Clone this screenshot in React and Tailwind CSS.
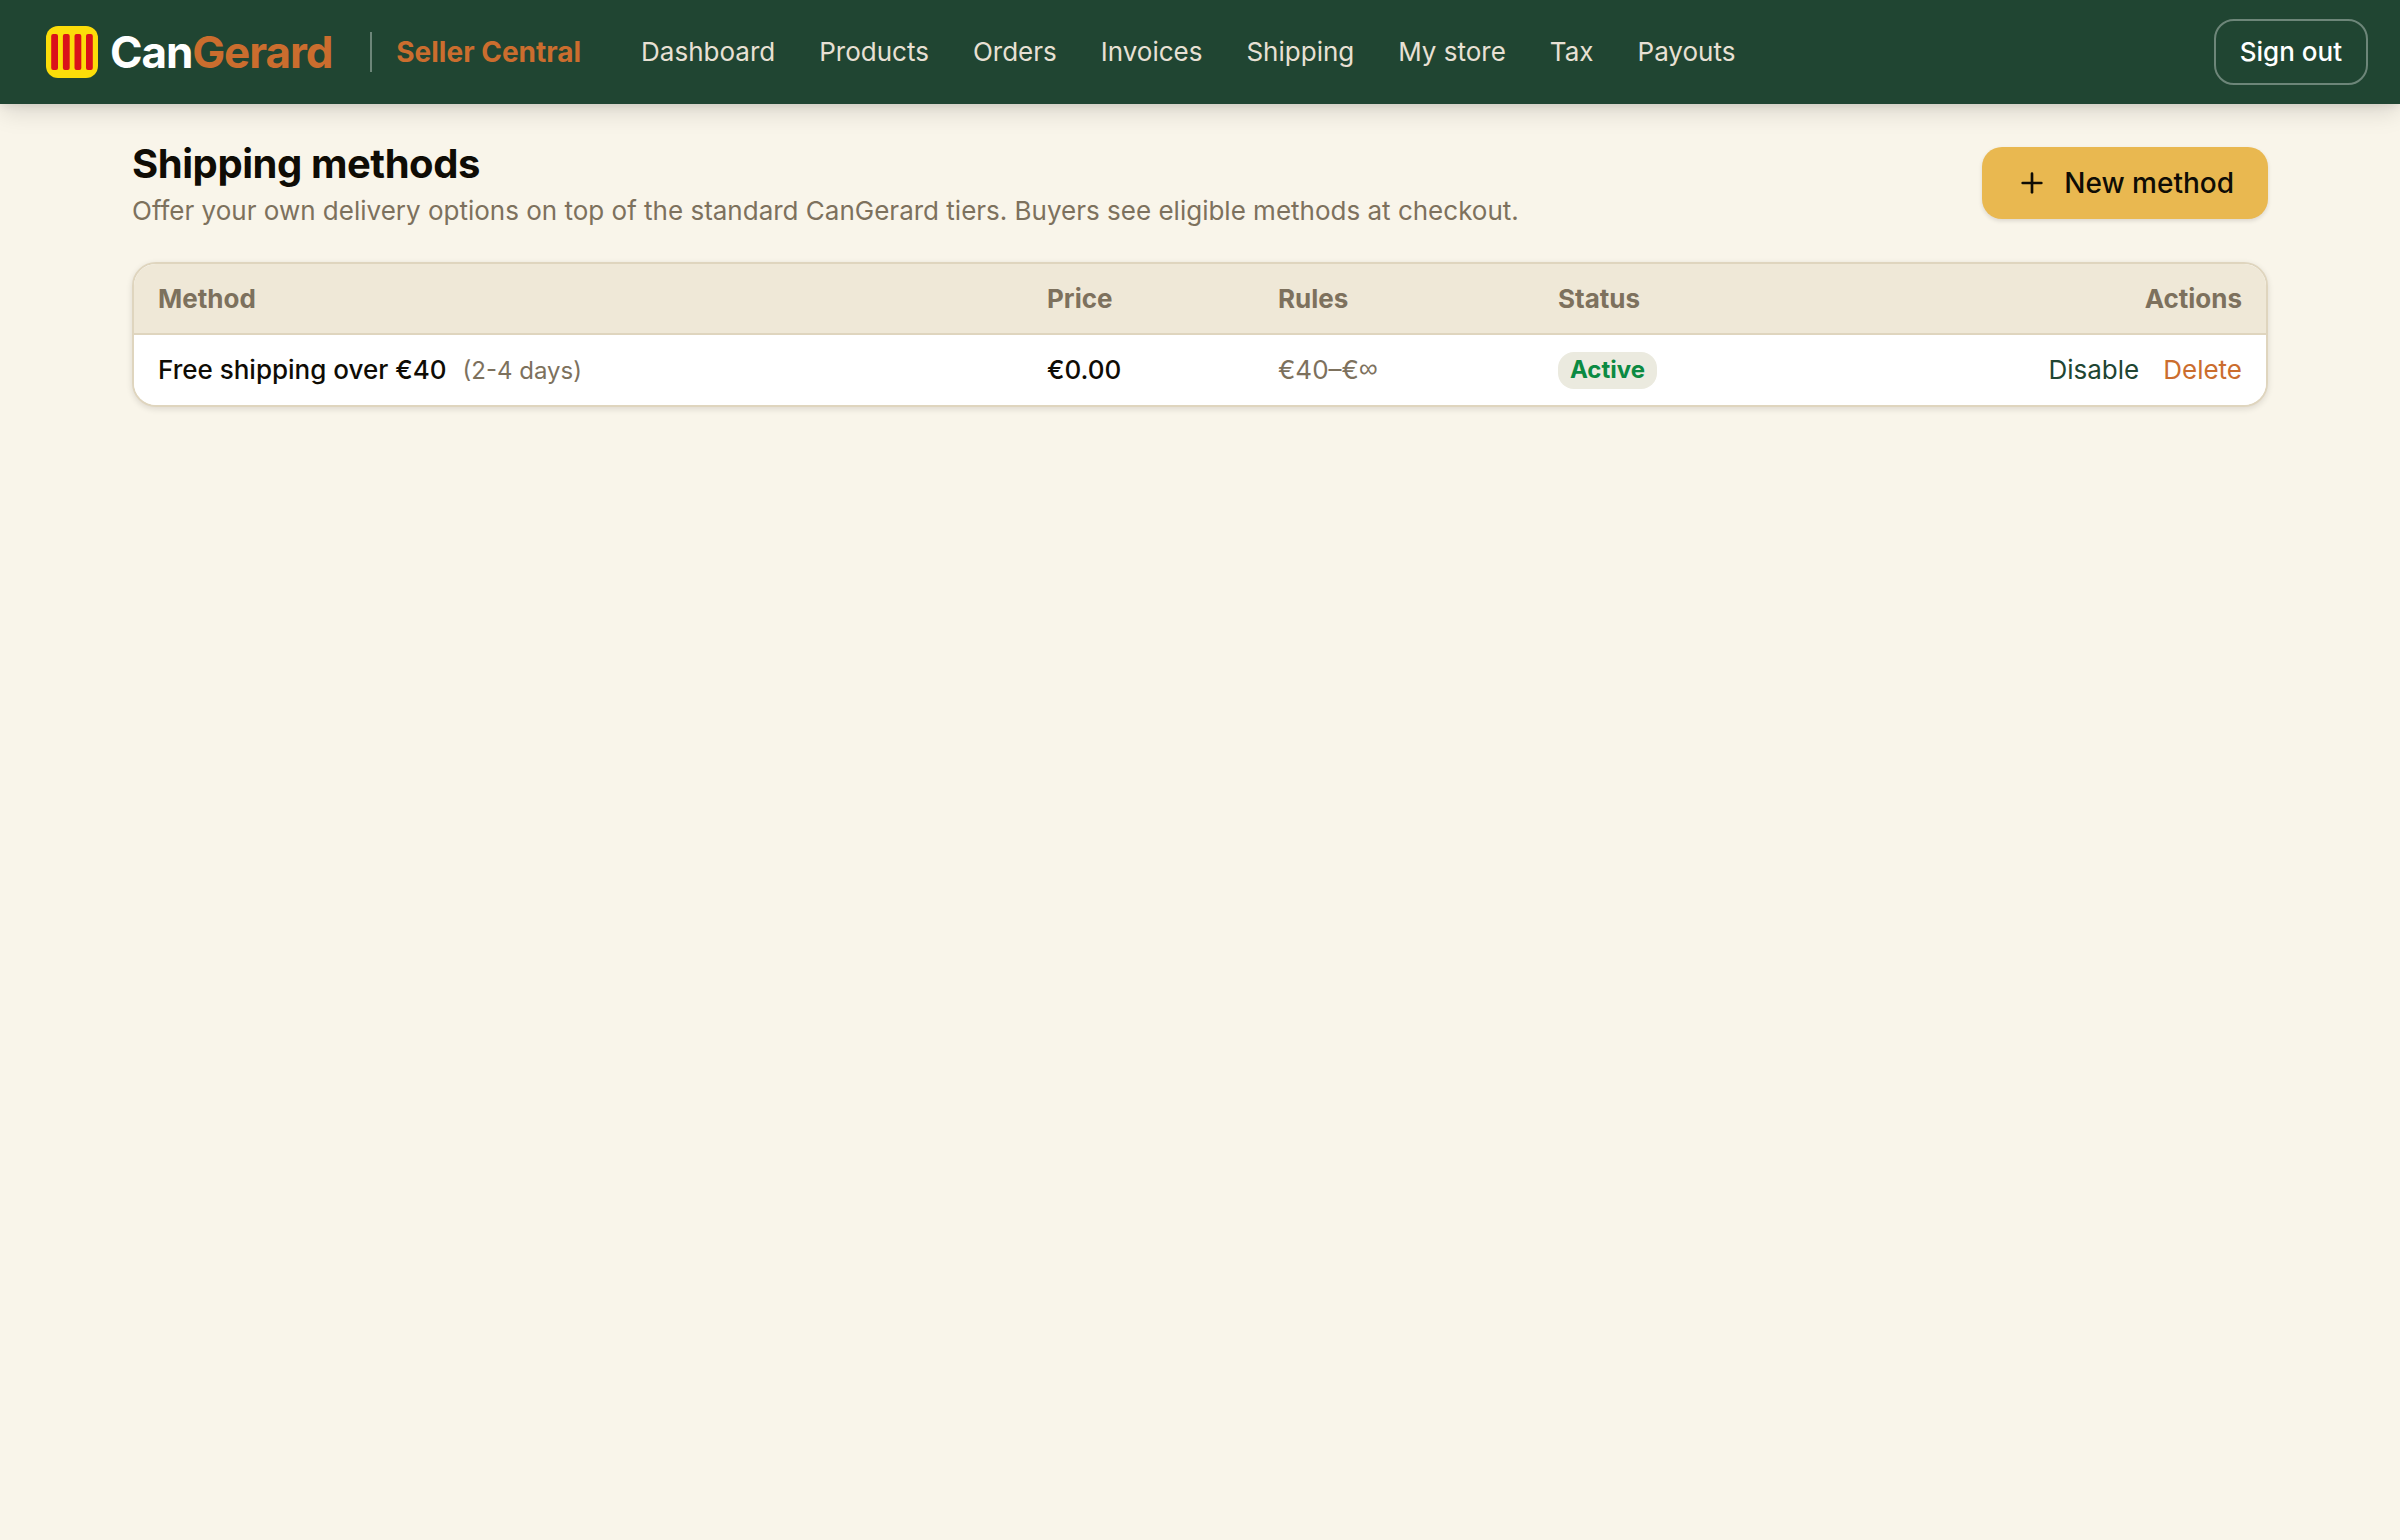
import React from 'react';
import { Plus } from 'lucide-react';

const navItems = ['Dashboard', 'Products', 'Orders', 'Invoices', 'Shipping', 'My store', 'Tax', 'Payouts'];

const methods = [
  { id: 1, name: 'Free shipping over €40', eta: '(2-4 days)', price: '€0.00', min: '€40', status: 'Active' },
];

const Logo = () => (
  <div className="flex items-center gap-3">
    <svg width="52" height="52" viewBox="0 0 52 52">
      <rect width="52" height="52" rx="12" fill="#fcdd09" />
      <rect x="5.2" y="8" width="6.8" height="36" rx="2" fill="#da121a" />
      <rect x="16.9" y="8" width="6.8" height="36" rx="2" fill="#da121a" />
      <rect x="28.5" y="8" width="6.8" height="36" rx="2" fill="#da121a" />
      <rect x="40" y="8" width="6.8" height="36" rx="2" fill="#da121a" />
    </svg>
    <span className="text-[44px] leading-none font-bold tracking-[-0.025em] text-white">
      Can<span className="text-[#cb6d2e]">Gerard</span>
    </span>
  </div>
);

const Header = () => (
  <header className="flex h-[104px] items-center bg-[#204532] pr-8 pl-[46px] shadow-[0_8px_24px_-2px_rgba(15,12,5,0.15),0_4px_8px_-2px_rgba(15,12,5,0.08)]">
    <Logo />
    <div className="ml-[38px] h-10 w-[2px] bg-white/35"></div>
    <span className="ml-6 text-[28px] leading-none font-bold text-[#cb6d2e]">Seller Central</span>
    <nav className="ml-[60px] flex items-center gap-[44px] pb-[2px]">
      {navItems.map((item) => (
        <a key={item} className="text-[26px] text-[#e8e0d4]">{item}</a>
      ))}
    </nav>
    <button className="ml-auto h-[66px] rounded-[20px] border-2 border-white/35 px-6 pb-[2px] text-[26px] font-medium text-white">
      Sign out
    </button>
  </header>
);

const MethodRow = ({ method }) => (
  <tr className="h-[70px] bg-white">
    <td className="px-6 pb-[2px]">
      <span className="font-medium">{method.name}</span>
      <span className="ml-4 text-2xl text-[#7d715d]">{method.eta}</span>
    </td>
    <td className="px-6 pb-[2px] font-medium">{method.price}</td>
    <td className="px-6 text-[#7d715d]">
      {method.min}–€<span className="relative -top-[2px] font-['Liberation_Sans',sans-serif]">∞</span>
    </td>
    <td className="px-6">
      <span className="flex h-[37px] w-fit items-center rounded-2xl bg-[#ebeadf] px-3 text-2xl font-bold text-[#0b8a42]">
        {method.status}
      </span>
    </td>
    <td className="px-6 pb-[2px] text-right">
      <button className="text-[#204532]">Disable</button>
      <button className="ml-6 text-[#cb6d2e]">Delete</button>
    </td>
  </tr>
);

const App = () => {
  return (
    <div className="min-h-[1540px] bg-[#f9f5ea] font-['Inter',sans-serif] text-[#0f0c05]">
      <Header />
      <main className="mx-auto w-[2136px] pt-10">
        <div className="flex h-[86px] items-start justify-between">
          <div>
            <h1 className="text-[40px] leading-[40px] font-bold tracking-[-0.011em]">Shipping methods</h1>
            <p className="mt-[7px] text-[26px] leading-[39px] text-[#7d715d]">
              Offer your own delivery options on top of the standard CanGerard tiers. Buyers see eligible methods at checkout.
            </p>
          </div>
          <button className="mt-[3px] flex h-[72px] items-center gap-4 rounded-[20px] bg-[#e9b850] px-[34px] text-[28px] font-medium shadow-[0_2px_4px_rgba(15,12,5,0.12)]">
            <Plus size={32} strokeWidth={2} />
            New method
          </button>
        </div>

        <div className="mt-8 h-[145px] overflow-hidden rounded-3xl border-2 border-[#dfd5be] bg-white shadow-[0_2px_6px_rgba(15,12,5,0.12)]">
          <table className="w-full table-fixed border-separate border-spacing-0 text-left text-[26px] leading-[39px]">
            <colgroup>
              <col className="w-[889px]" />
              <col className="w-[231px]" />
              <col className="w-[280px]" />
              <col className="w-[280px]" />
              <col />
            </colgroup>
            <thead>
              <tr className="h-[71px] bg-[#efe8d7] text-[#7d715d]">
                <th className="border-b-2 border-[#dfd5be] px-6 font-bold">Method</th>
                <th className="border-b-2 border-[#dfd5be] px-6 font-bold">Price</th>
                <th className="border-b-2 border-[#dfd5be] px-6 font-bold">Rules</th>
                <th className="border-b-2 border-[#dfd5be] px-6 font-bold">Status</th>
                <th className="border-b-2 border-[#dfd5be] px-6 text-right font-bold">Actions</th>
              </tr>
            </thead>
            <tbody>
              {methods.map((m) => (
                <MethodRow key={m.id} method={m} />
              ))}
            </tbody>
          </table>
        </div>
      </main>
    </div>
  );
};

export default App;
